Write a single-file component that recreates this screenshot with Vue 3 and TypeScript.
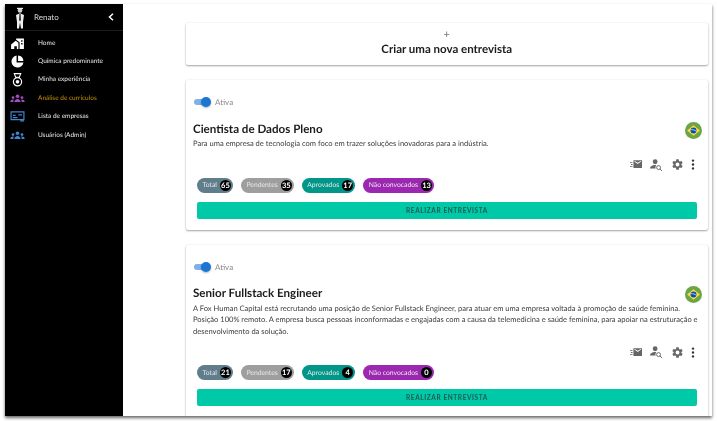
<script setup lang="ts">
interface Stat { label: string; value: number; tone: string }
interface Job { title: string; lines: string[]; stats: Stat[]; }
interface NavItem { label: string; icon: string; color: string; active?: boolean }

const nav: NavItem[] = [
  { label: 'Home', icon: 'home', color: '#ffffff' },
  { label: 'Química predominante', icon: 'pie', color: '#ffffff' },
  { label: 'Minha experiência', icon: 'medal', color: '#ffffff' },
  { label: 'Análise de currículos', icon: 'people', color: '#a04fc0', active: true },
  { label: 'Lista de empresas', icon: 'board', color: '#3f86cf' },
  { label: 'Usuários (Admin)', icon: 'people', color: '#3f86cf' },
]

const makeStats = (a: number, b: number, c: number, d: number): Stat[] => [
  { label: 'Total', value: a, tone: 'slate' },
  { label: 'Pendentes', value: b, tone: 'grey' },
  { label: 'Aprovados', value: c, tone: 'teal' },
  { label: 'Não convocados', value: d, tone: 'purple' },
]

const jobs: Job[] = [
  {
    title: 'Cientista de Dados Pleno',
    lines: ['Para uma empresa de tecnologia com foco em trazer soluções inovadoras para a indústria.'],
    stats: makeStats(65, 35, 17, 13),
  },
  {
    title: 'Senior Fullstack Engineer',
    lines: [
      'A Fox Human Capital está recrutando uma posição de Senior Fullstack Engineer, para atuar em uma empresa voltada à promoção de saúde feminina.',
      'Posição 100% remoto. A empresa busca pessoas inconformadas e engajadas com a causa da telemedicina e saúde feminina, para apoiar na estruturação e',
      'desenvolvimento da solução.',
    ],
    stats: makeStats(21, 17, 4, 0),
  },
]
</script>

<template>
  <div class="stage">
    <div class="window">
      <aside class="sidebar">
        <header class="profile">
          <svg class="avatar" viewBox="0 0 14 22" width="14" height="22">
            <circle cx="7" cy="3.500" r="2.300" fill="#cfcfcf" />
            <path d="M4 .8h6v1.300H4z" fill="#eee" />
            <path d="M3 8l4-1.800L11 8l-1 7v6.500H8L7 15.500 6 21.500H4V15z" fill="#efefef" />
            <path d="M6.400 7h1.200l.4 6-1 1.500L6 13z" fill="#333" />
          </svg>
          <span class="name">Renato</span>
          <svg class="chevron" viewBox="0 0 6 8" width="6" height="8">
            <path d="M5 .8L1.500 4 5 7.200" fill="none" stroke="#fff" stroke-width="1.500" />
          </svg>
        </header>
        <nav class="menu">
          <a v-for="item in nav" :key="item.label" class="menu-item" :class="{ active: item.active }">
            <span class="menu-icon" :style="{ color: item.color }">
              <svg v-if="item.icon === 'home'" viewBox="0 0 14 12" width="13" height="11">
                <path d="M0 7L5 3l3 2.300V12H6.300V9H3.500v3H0z" fill="currentColor" />
                <path d="M5.500 1.800V.5H14V12H9.300V4.500z" fill="currentColor" />
                <path d="M11 2.500h1.500V4H11zM11 5.500h1.500V7H11z" fill="#000" />
              </svg>
              <svg v-else-if="item.icon === 'pie'" viewBox="0 0 14 14" width="13" height="13">
                <path d="M6 .6A6.500 6.500 0 1 0 13.400 8H6z" fill="currentColor" />
                <path d="M7.600.6A6.500 6.500 0 0 1 13.400 6.400H7.600z" fill="currentColor" />
              </svg>
              <svg v-else-if="item.icon === 'medal'" viewBox="0 0 12 15" width="11" height="14">
                <path d="M2.500.5h7L8 4.500H4z" fill="none" stroke="currentColor" stroke-width="1.200" />
                <circle cx="6" cy="9.500" r="4.500" fill="none" stroke="currentColor" stroke-width="1.300" />
                <circle cx="6" cy="9.500" r="2" fill="currentColor" />
              </svg>
              <svg v-else-if="item.icon === 'people'" viewBox="0 0 16 10" width="15" height="9">
                <circle cx="8" cy="2.500" r="2" fill="currentColor" />
                <circle cx="3" cy="4" r="1.500" fill="currentColor" />
                <circle cx="13" cy="4" r="1.500" fill="currentColor" />
                <path d="M4.500 9c0-2 1.500-3.500 3.500-3.500s3.500 1.500 3.500 3.500z" fill="currentColor" />
                <path d="M0 9c0-1.500 1-2.800 3-2.800.4 0 .7 0 1 .2-.5.8-.7 1.600-.7 2.600zM16 9c0-1.500-1-2.800-3-2.800-.4 0-.7 0-1 .2.500.8.7 1.600.7 2.600z" fill="currentColor" />
              </svg>
              <svg v-else viewBox="0 0 16 12" width="15" height="11">
                <path d="M1 1h14v8.500H1z" fill="none" stroke="currentColor" stroke-width="1.300" />
                <path d="M3 4h3v1.500H3zM3 6.500h5V8H3zM9 3.500h4V5H9z" fill="currentColor" />
                <path d="M11 10h4v1.500h-4z" fill="currentColor" />
              </svg>
            </span>
            <span class="menu-label">{{ item.label }}</span>
          </a>
        </nav>
      </aside>

      <main class="content">
        <section class="card new-card">
          <span class="plus">+</span>
          <h2 class="new-title">Criar uma nova entrevista</h2>
        </section>

        <section v-for="job in jobs" :key="job.title" class="card job">
          <div class="switch-row">
            <span class="switch"><span class="knob"></span></span>
            <span class="switch-label">Ativa</span>
          </div>
          <div class="title-row">
            <h3 class="job-title">{{ job.title }}</h3>
            <svg class="flag" viewBox="0 0 16 16" width="17" height="17">
              <circle cx="8" cy="8" r="8" fill="#6da544" />
              <path d="M8 3l6 5-6 5-6-5z" fill="#ffda44" />
              <circle cx="8" cy="8" r="2.800" fill="#0052b4" />
              <path d="M5.400 7.300c2-.3 3.800.2 5.200 1.400" fill="none" stroke="#f0f0f0" stroke-width=".7" />
            </svg>
          </div>
          <p class="desc"><span v-for="line in job.lines" :key="line" class="line">{{ line }}</span></p>
          <div class="actions">
            <svg viewBox="0 0 14 10" width="12" height="9" class="action"><path d="M4 0h10v9H4zM5 1.500l4 2.800 4-2.800-.6-.7L9 3 5.600.8z" fill="currentColor" fill-rule="evenodd" /><path d="M0 2h3v1H0zM1 4.500h2v1H1zM0 7h3v1H0z" fill="currentColor" /></svg>
            <svg viewBox="0 0 14 14" width="12" height="12" class="action"><circle cx="6" cy="3.200" r="2.800" fill="currentColor" /><path d="M0 11c0-2.500 3-4 6-4 .5 0 1 0 1.400.1A4 4 0 0 0 6.500 11z" fill="currentColor" /><circle cx="10" cy="10" r="2.300" fill="none" stroke="currentColor" stroke-width="1.100" /><path d="M11.700 11.700L14 14" stroke="currentColor" stroke-width="1.100" /></svg>
            <svg viewBox="0 0 24 24" width="13" height="13" class="action"><path d="M19.140 12.940c.04-.3.060-.61.060-.94s-.02-.64-.07-.94l2.030-1.580a.5.500 0 0 0 .12-.61l-1.920-3.320a.5.500 0 0 0-.59-.22l-2.390.96a7 7 0 0 0-1.620-.94l-.36-2.540a.5.500 0 0 0-.48-.41h-3.840a.5.500 0 0 0-.47.41l-.36 2.540c-.59.24-1.130.57-1.620.94l-2.390-.96a.5.500 0 0 0-.59.22L2.740 8.870a.5.500 0 0 0 .12.61l2.030 1.580c-.05.3-.09.63-.09.94s.02.64.07.94l-2.030 1.580a.5.500 0 0 0-.12.61l1.920 3.320c.12.22.37.29.59.22l2.390-.96c.5.38 1.030.7 1.620.94l.36 2.540c.05.24.24.41.48.41h3.840c.24 0 .44-.17.47-.41l.36-2.540c.59-.24 1.130-.56 1.620-.94l2.390.96c.22.08.47 0 .59-.22l1.920-3.320a.5.500 0 0 0-.12-.61zM12 15.600A3.600 3.600 0 1 1 12 8.400a3.600 3.600 0 0 1 0 7.200z" fill="currentColor" /></svg>
            <svg viewBox="0 0 4 14" width="4" height="11" class="action dots"><circle cx="2" cy="2" r="1.500" fill="#333" /><circle cx="2" cy="7" r="1.500" fill="#333" /><circle cx="2" cy="12" r="1.500" fill="#333" /></svg>
          </div>
          <div class="stats">
            <span v-for="stat in job.stats" :key="stat.label" class="chip" :class="stat.tone">
              <span class="chip-label">{{ stat.label }}</span>
              <span class="chip-count">{{ stat.value }}</span>
            </span>
          </div>
          <button class="cta" type="button">REALIZAR ENTREVISTA</button>
        </section>
      </main>
    </div>
  </div>
</template>

<style>
html, body { margin: 0; background: #fff; overflow: hidden; }
</style>

<style scoped>
.stage {
  width: 717px;
  height: 421px;
  box-sizing: border-box;
  padding: 4px 5px 5px;
  background: #fff;
  overflow: hidden;
  font-family: Lato, "Open Sans", sans-serif;
  text-rendering: geometricPrecision;
  filter: blur(0.3px);
}
.window {
  display: flex;
  height: 412px;
  overflow: hidden;
  background: #fff;
  box-shadow: 0 2px 3px 0 rgba(0, 0, 0, 0.6);
}
.sidebar {
  flex: 0 0 118px;
  background: #000;
  color: #fff;
}
.profile {
  display: flex;
  align-items: center;
  height: 26px;
  padding-left: 8px;
  border-bottom: 1px solid #1d1d1d;
}
.avatar { flex: none; margin-top: 2px; }
.name {
  margin-left: 7px;
  font-size: 8px;
  color: #d8d8d8;
}
.chevron { margin-left: auto; margin-right: 9px; }
.menu { display: flex; flex-direction: column; }
.menu-item {
  display: flex;
  align-items: center;
  height: 18.4px;
  font-size: 6.500px;
  color: #e6e6e6;
}
.menu-item:first-child { margin-top: 3px; }
.menu-item.active { color: #c8900a; }
.menu-icon {
  flex: 0 0 33px;
  display: flex;
  justify-content: center;
  padding-right: 8px;
  box-sizing: border-box;
}
.content {
  flex: 1;
  padding: 19px 4px 0 62.500px;
  display: flex;
  flex-direction: column;
  gap: 15px;
  min-width: 0;
}
.card {
  flex: none;
  background: #fff;
  border-radius: 2px;
  box-shadow: 0 1px 2px rgba(0, 0, 0, 0.35), 0 0 2px rgba(0, 0, 0, 0.08);
}
.new-card {
  height: 42px;
  display: flex;
  flex-direction: column;
  align-items: center;
  padding-top: 6px;
  box-sizing: border-box;
}
.plus { font-size: 11px; line-height: 11px; color: #777; }
.new-title {
  margin: 2px 0 0;
  font-size: 11.500px;
  line-height: 15px;
  font-weight: 700;
  color: #1c1c1c;
}
.job { padding: 15px 11px 11px 7.500px; }
.switch-row { display: flex; align-items: center; height: 14px; }
.switch {
  position: relative;
  width: 15px;
  height: 6px;
  margin-left: 1px;
  border-radius: 3px;
  background: #7fb0e6;
}
.knob {
  position: absolute;
  right: -2px;
  top: -2px;
  width: 10px;
  height: 10px;
  border-radius: 50%;
  background: #1976d2;
  box-shadow: 0 1px 2px rgba(0, 0, 0, 0.3);
}
.switch-label { margin-left: 6px; font-size: 8px; color: #8a8a8a; }
.title-row { display: flex; align-items: center; justify-content: space-between; margin-top: 11px; height: 18px; margin-right: -5px; }
.job-title { margin: 0; font-size: 11.600px; font-weight: 700; color: #1c1c1c; }
.flag { flex: none; margin-top: 2px; }
.desc { margin: 0; font-size: 7.550px; line-height: 11.500px; color: #3c3c3c; }
.line { display: block; white-space: nowrap; }
.actions {
  display: flex;
  justify-content: flex-end;
  align-items: center;
  gap: 8.500px;
  height: 14px;
  margin-top: 8px;
  margin-right: 2px;
  color: #666;
}
.dots { margin-left: -1px; }
.stats {
  display: flex;
  gap: 8px;
  margin-top: 6px;
  padding-left: 4px;
}
.chip {
  display: inline-flex;
  align-items: center;
  height: 15px;
  padding: 0 2px 0 5.500px;
  border-radius: 8px;
  font-size: 6.800px;
  color: #e8e8e8;
}
.chip-count {
  display: inline-flex;
  justify-content: center;
  align-items: center;
  min-width: 11px;
  height: 11px;
  margin-left: 3px;
  border-radius: 50%;
  background: #000;
  color: #fff;
  font-size: 7.500px;
  font-weight: 700;
}
.slate { background: #607d8b; }
.grey { background: #9e9e9e; }
.teal { background: #009688; }
.purple { background: #9c27b0; }
.cta {
  display: block;
  width: calc(100% - 4px);
  height: 17px;
  margin: 9px 0 0 4px;
  padding: 0;
  border: 0;
  border-radius: 2px;
  background: #00c9a7;
  color: #1a5a50;
  font: 700 6.500px Lato, sans-serif;
  letter-spacing: 0.6px;
}
</style>
